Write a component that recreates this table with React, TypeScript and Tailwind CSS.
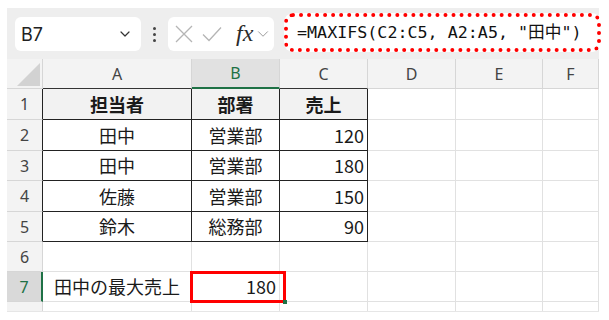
import { ChevronDown } from "lucide-react";

const jp = "font-['Noto_Sans_CJK_JP',sans-serif]";

type Row = {
	n: number;
	h: string;
	cells: string[];
};

const rows: Row[] = [
	{ n: 1, h: "h-[31px]", cells: ["担当者", "部署", "売上"] },
	{ n: 2, h: "h-[31px]", cells: ["田中", "営業部", "120"] },
	{ n: 3, h: "h-[30px]", cells: ["田中", "営業部", "180"] },
	{ n: 4, h: "h-[31px]", cells: ["佐藤", "営業部", "150"] },
	{ n: 5, h: "h-[30px]", cells: ["鈴木", "総務部", "90"] },
	{ n: 6, h: "h-[30px]", cells: ["", "", ""] },
	{ n: 7, h: "h-[30px]", cells: ["田中の最大売上", "180", ""] },
];

const letters = ["A", "B", "C", "D", "E", "F"];

// thin cancel / enter glyphs of the formula bar
const CancelIcon = () => (
	<svg width="18" height="18" viewBox="0 0 18 18" className="text-[#b5b5b5]">
		<path d="M1 1L17 17M17 1L1 17" stroke="currentColor" strokeWidth="1.3" fill="none" />
	</svg>
);

const EnterIcon = () => (
	<svg width="20" height="16" viewBox="0 0 20 16" className="text-[#b5b5b5]">
		<path d="M1 8.5L7 14.5L19 1.5" stroke="currentColor" strokeWidth="1.3" fill="none" />
	</svg>
);

const Toolbar = () => (
	<div className="flex items-center h-[51px] bg-[#eeeeee] pl-[8px]">
		<div className="flex items-center justify-between w-[126px] h-[34px] bg-white rounded-[6px] pl-[6px] pr-[8px] mt-[1px]">
			<span className="font-['Inter',sans-serif] text-[18px] text-[#222]">B7</span>
			<ChevronDown size={16} strokeWidth={1.8} className="text-[#333]" />
		</div>
		<div className="flex flex-col gap-[3px] mx-[12px] mt-[1px]">
			<span className="w-[3px] h-[3px] rounded-full bg-[#444]" />
			<span className="w-[3px] h-[3px] rounded-full bg-[#444]" />
			<span className="w-[3px] h-[3px] rounded-full bg-[#444]" />
		</div>
		<div className="flex items-center w-[106px] h-[34px] bg-white rounded-[6px] pl-[7px] mt-[1px]">
			<CancelIcon />
			<span className="ml-[9px]">
				<EnterIcon />
			</span>
			<span className="font-['Liberation_Serif',serif] italic text-[24px] text-[#2a2a2a] ml-[14px] leading-none -mt-[3px]">
				fx
			</span>
			<ChevronDown size={18} strokeWidth={1.3} className="text-[#999] ml-[1px]" />
		</div>
		<div className="flex items-center w-[317px] h-[39px] ml-[10px] -mr-[2px] mb-[2px] border-[4px] border-dotted border-[#ff0000] rounded-[9px] bg-white pl-[9px]">
			<span className="font-['DejaVu_Sans_Mono','Noto_Sans_CJK_JP',monospace] text-[16.7px] text-[#111] whitespace-pre">
				=MAXIFS(C2:C5, A2:A5, "田中")
			</span>
		</div>
	</div>
);

const Sheet = () => (
	<div className="relative grid grid-cols-[36px_149px_88px_88px_88px_87px_56px] bg-white">
		{/* corner and column letters */}
		<div className="relative h-[30px] bg-[#f3f3f3] border-r border-b border-[#d6d6d6]">
			<div className="absolute right-[2px] bottom-[2px] w-0 h-0 border-l-[23px] border-l-transparent border-b-[23px] border-b-[#d2d2d2]" />
		</div>
		{letters.map((l, i) => (
			<div
				key={l}
				className={`h-[30px] flex items-center justify-center font-['Noto_Sans',sans-serif] text-[16px] border-r border-[#d6d6d6] ${
					i === 1
						? "bg-[#e1e1e1] text-[#1e7145] border-b-2 border-b-[#1e7145]"
						: i < 3
							? "bg-[#f3f3f3] text-[#444] border-b border-b-[#333]"
							: "bg-[#f3f3f3] text-[#444] border-b border-b-[#d6d6d6]"
				}`}
			>
				{l}
			</div>
		))}

		{rows.map((r) => {
			const inTable = r.n <= 5;
			const active = r.n === 7;
			return [
				<div
					key={`h${r.n}`}
					className={`${r.h} flex items-center justify-center font-['Noto_Sans',sans-serif] text-[16px] border-b border-b-[#d6d6d6] ${
						active
							? "bg-[#d9d9d9] text-[#1e7145] border-r-2 border-r-[#1e7145]"
							: inTable
								? "bg-[#f3f3f3] text-[#444] border-r border-r-[#222]"
								: "bg-[#f3f3f3] text-[#444] border-r border-r-[#d6d6d6]"
					}`}
				>
					{r.n}
				</div>,
				...letters.map((l, ci) => {
					const text = r.cells[ci] ?? "";
					const tableCell = inTable && ci < 3;
					const numeric = /^\d+$/.test(text);
					const border = tableCell
						? "border-r border-r-[#222] border-b border-b-[#222]"
						: "border-r border-r-[#e1e1e1] border-b border-b-[#e1e1e1]";
					const fill = r.n === 1 && ci < 3 ? "bg-[#f2f2f2] font-bold" : "";
					const align = numeric
						? "justify-end pr-[3px]"
						: tableCell
							? "justify-center"
							: "justify-start pl-[11px]";
					return (
						<div
							key={`${l}${r.n}`}
							className={`${r.h} flex items-center ${align} ${border} ${fill} ${jp} text-[18px] text-[#1a1a1a]`}
						>
							{text}
						</div>
					);
				}),
			];
		})}

		{/* partial row 8 */}
		<div className="h-[9px] bg-[#f3f3f3] border-r border-[#d6d6d6]" />
		{letters.map((l) => (
			<div key={`${l}8`} className="h-[9px] border-r border-[#e1e1e1]" />
		))}

		{/* active cell B7 */}
		<div className="absolute left-[183px] top-[212px] w-[96px] h-[32px] border-[3px] border-[#ff0000] pointer-events-none">
			<div className="absolute -right-[4px] -bottom-[4px] w-[4px] h-[4px] bg-[#1e7145]" />
		</div>
	</div>
);

export default function App() {
	return (
		<div className="w-[609px] h-[320px] bg-white pt-[8px] pl-[7px] overflow-hidden">
			<div className="w-[592px] border-b border-[#e6e6e6]">
				<Toolbar />
				<Sheet />
			</div>
		</div>
	);
}
